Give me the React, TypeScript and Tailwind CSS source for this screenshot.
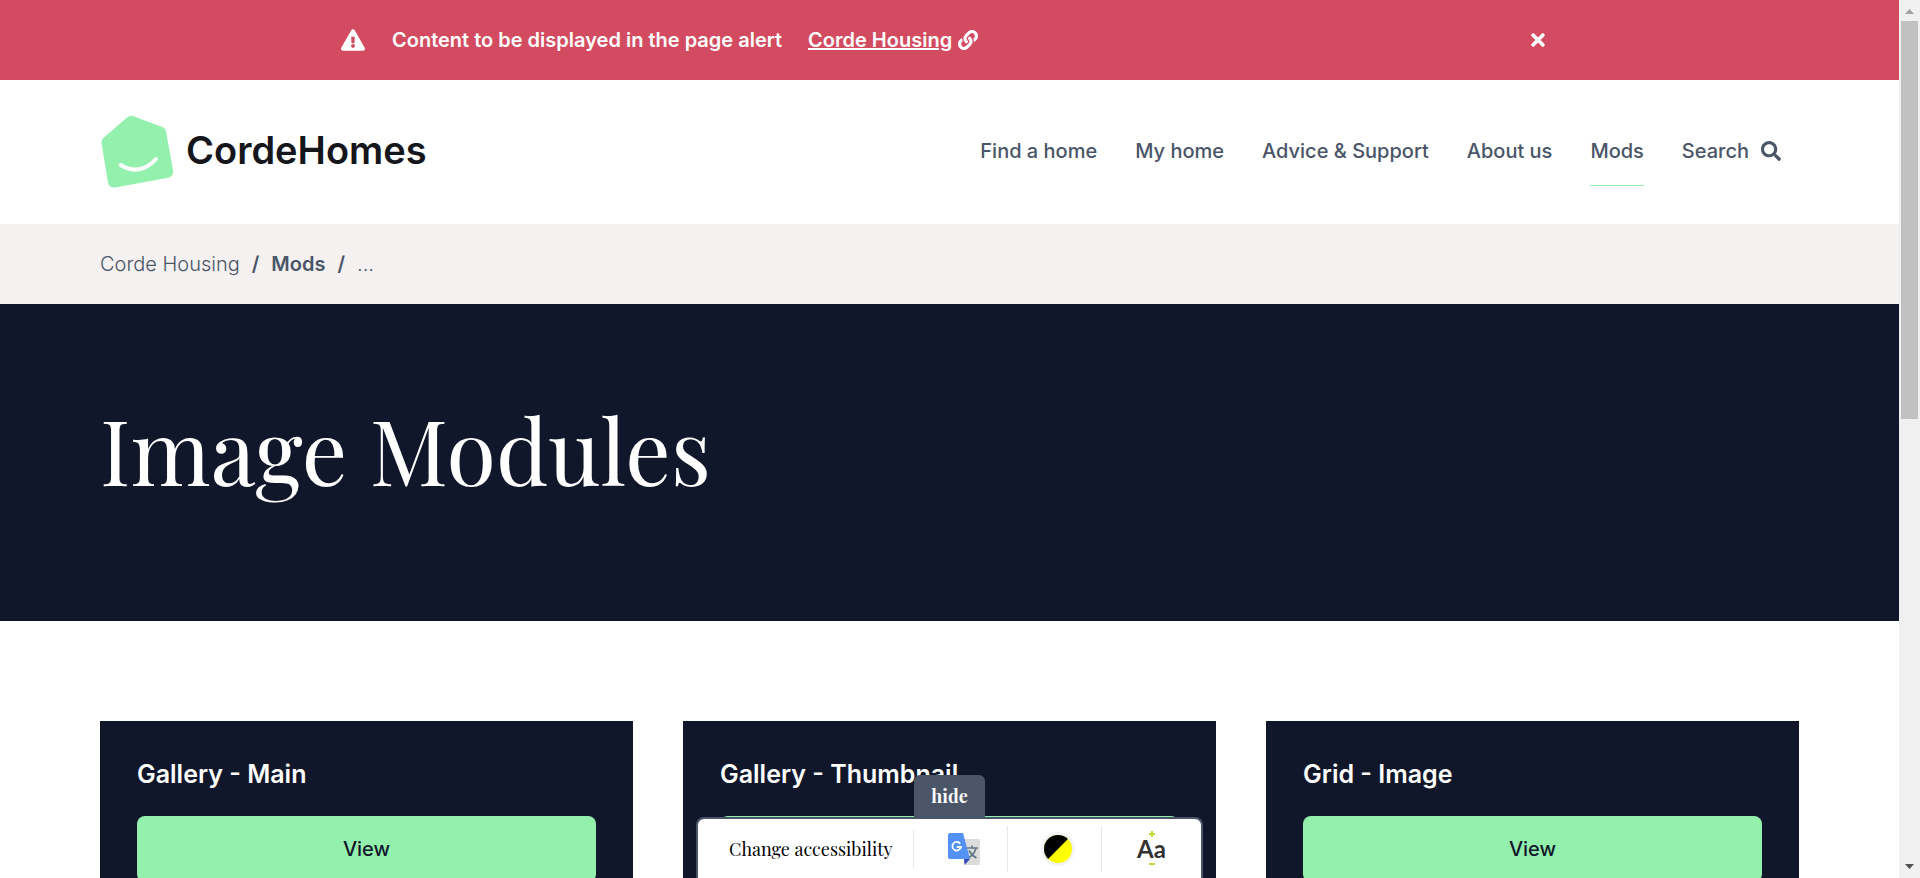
import React from "react";
import { FaExclamationTriangle, FaLink, FaSearch, FaTimes } from "react-icons/fa";

const navItems = [
  { label: "Find a home" },
  { label: "My home" },
  { label: "Advice & Support" },
  { label: "About us" },
  { label: "Mods", active: true },
];

const cards = ["Gallery - Main", "Gallery - Thumbnail", "Grid - Image"];

function LogoMark() {
  return (
    <svg viewBox="33 46 219 217" className="size-[73px]" aria-hidden="true">
      <path
        d="M124 66 L210 98 L231 215 L72 244 L53 127 Z"
        fill="#94f1ad"
        stroke="#94f1ad"
        strokeWidth="37"
        strokeLinejoin="round"
      />
      <path d="M92 195 Q150 230 198 177" fill="none" stroke="#fff" strokeWidth="12" strokeLinecap="round" />
    </svg>
  );
}

function TranslateIcon() {
  return (
    <svg viewBox="0 0 34 34" className="size-[34px]" aria-hidden="true">
      <path d="M14 7h17a2 2 0 0 1 2 2v22a2 2 0 0 1-2 2H18z" fill="#dcdcdc" />
      <path d="M17 27h6l-5.500 6z" fill="#3747b3" />
      <path d="M3 1h13l7 26H3a2 2 0 0 1-2-2V3a2 2 0 0 1 2-2z" fill="#5491f5" />
      <path
        d="M13.200 11.800A4.300 4.300 0 1 0 13.900 15H9.800"
        fill="none"
        stroke="#fff"
        strokeWidth="1.800"
      />
      <path
        d="M20 16h11M25 13.500V16M29 16c-1 4-3.500 7.500-7 9.500M22 18.500c1.500 3 4 5.500 7.500 7.500"
        fill="none"
        stroke="#607988"
        strokeWidth="1.700"
      />
    </svg>
  );
}

function ContrastIcon() {
  return (
    <svg viewBox="0 0 36 36" className="size-9" aria-hidden="true">
      <circle cx="18" cy="18" r="17" fill="#f3f3f3" />
      <circle cx="18" cy="18" r="14" fill="#ffff00" />
      <path d="M8.100 27.900A14 14 0 0 1 27.900 8.100Z" fill="#000" />
    </svg>
  );
}

function AccessibilityBar() {
  return (
    <aside className="absolute inset-x-0 bottom-0 mx-auto flex w-[507px] flex-col items-center font-['Playfair_Display','Liberation_Serif',serif]">
      <button type="button" className="flex h-[42px] w-[71px] items-center justify-center rounded-t-md bg-[#4a5568] text-lg font-bold text-white">
        hide
      </button>
      <div className="flex h-[61px] w-full items-center rounded-t-lg border-2 border-b-0 border-[#4a5568] bg-white text-black">
        <span className="w-[215px] pl-[31px] text-lg whitespace-nowrap">Change accessibility</span>
        <button type="button" aria-label="Translate" className="flex h-[38px] w-[94px] items-center justify-center border-l border-gray-200 pl-1.5">
          <TranslateIcon />
        </button>
        <button type="button" aria-label="Contrast" className="flex h-[46px] w-[94px] items-center justify-center border-l border-gray-200 pl-1.5">
          <ContrastIcon />
        </button>
        <button type="button" className="flex h-[46px] flex-1 flex-col items-center justify-center border-l border-gray-200 pb-0.5 font-['Lato',sans-serif]">
          <svg viewBox="0 0 6 6" className="size-1.5" aria-hidden="true">
            <path d="M3 0v6M0 3h6" stroke="#c4d92e" strokeWidth="2" />
          </svg>
          <span className="text-2xl leading-6 font-bold text-[#333]">Aa</span>
          <svg viewBox="0 0 6 4" className="h-1 w-1.5" aria-hidden="true">
            <path d="M0 3h6" stroke="#c4d92e" strokeWidth="2" />
          </svg>
        </button>
      </div>
    </aside>
  );
}

function ScrollRail() {
  return (
    <div className="flex w-[21px] shrink-0 flex-col items-center bg-[#f0f0f0]" aria-hidden="true">
      <svg viewBox="0 0 9 5" className="mt-[9px] mb-[7px] h-[5px] w-[9px] shrink-0">
        <path d="M0 5L4.500 0L9 5Z" fill="#a3a3a3" />
      </svg>
      <div className="h-[398px] w-[17px] bg-[#c1c1c1]" />
      <svg viewBox="0 0 9 5" className="mt-auto mb-[9px] h-[5px] w-[9px] shrink-0">
        <path d="M0 0L4.500 5L9 0Z" fill="#505050" />
      </svg>
    </div>
  );
}

export default function App() {
  return (
    <div className="flex h-screen overflow-hidden bg-white font-['Inter',sans-serif] text-xl">
      <div className="relative min-w-0 flex-1 overflow-hidden">
        <div className="bg-[#d34b60] text-white">
          <div className="mx-auto flex h-20 max-w-[1217px] items-center font-semibold">
            <FaExclamationTriangle className="size-6" />
            <p className="ml-[27px]">Content to be displayed in the page alert</p>
            <a href="#" className="ml-[26px] flex items-center gap-1.5">
              <span className="underline">Corde Housing</span>
              <FaLink />
            </a>
            <button type="button" aria-label="Close alert" className="ml-auto p-2.5">
              <FaTimes />
            </button>
          </div>
        </div>

        <header className="flex h-36 items-center justify-between px-[100px] pb-0.5">
          <a href="#" className="ml-px flex items-center gap-3 text-[38px] font-semibold text-[#14161c]">
            <LogoMark />
            <span>CordeHomes</span>
          </a>
          <nav className="mr-[18px] flex items-center gap-[38px] font-medium text-[#4a5568]">
            {navItems.map((item) => (
              <a
                key={item.label}
                href="#"
                className={
                  item.active
                    ? "flex h-[70px] items-center border-y border-t-transparent border-b-[#94f1ad]"
                    : "flex h-[70px] items-center"
                }
              >
                {item.label}
              </a>
            ))}
            <button type="button" className="flex items-center gap-3">
              Search
              <FaSearch />
            </button>
          </nav>
        </header>

        <nav aria-label="Breadcrumb" className="flex h-20 items-center gap-3 bg-[#f5f1f0] px-[100px] font-light text-[#4a5568]">
          <a href="#">Corde Housing</a>
          <span className="font-semibold">/</span>
          <a href="#" className="font-semibold">Mods</a>
          <span className="font-semibold">/</span>
          <span>...</span>
        </nav>

        <section className="flex h-[317px] items-center bg-[#11172a] px-[100px] pb-7">
          <h1 className="font-['Playfair_Display','Liberation_Serif',serif] text-[90px] leading-none text-white">Image Modules</h1>
        </section>

        <main className="grid grid-cols-3 gap-[50px] px-[100px] py-[100px]">
          {cards.map((title) => (
            <article key={title} className="bg-[#11172a] px-[37px] pt-[35px] pb-9">
              <h2 className="text-[25px] leading-9 font-semibold text-white">{title}</h2>
              <a href="#" className="mt-6 flex h-[66px] items-center justify-center rounded-lg bg-[#94f1ad] font-medium text-[#11172a]">
                View
              </a>
            </article>
          ))}
        </main>

        <AccessibilityBar />
      </div>
      <ScrollRail />
    </div>
  );
}
